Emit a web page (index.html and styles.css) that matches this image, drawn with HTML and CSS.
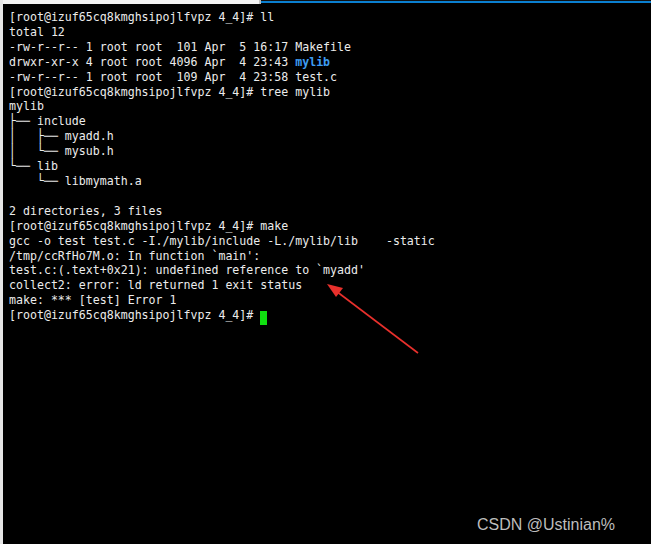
FILE: index.html
```html
<!DOCTYPE html>
<html>
<head>
<meta charset="utf-8">
<link rel="stylesheet" href="styles.css">
</head>
<body>
<div class="window">
  <div class="topbar"><div class="tab"></div><div class="accent"></div></div>
  <div class="term">
<pre class="out">[root@izuf65cq8kmghsipojlfvpz 4_4]# ll
total 12
-rw-r--r-- 1 root root  101 Apr  5 16:17 Makefile
drwxr-xr-x 4 root root 4096 Apr  4 23:43 <span class="dir">mylib</span>
-rw-r--r-- 1 root root  109 Apr  4 23:58 test.c
[root@izuf65cq8kmghsipojlfvpz 4_4]# tree mylib
mylib
<span class="bx">├</span>── include
<span class="bx">│</span>   <span class="bx">├</span>── myadd.h
<span class="bx">│</span>   <span class="bx">└</span>── mysub.h
<span class="bx">└</span>── lib
    <span class="bx">└</span>── libmymath.a

2 directories, 3 files
[root@izuf65cq8kmghsipojlfvpz 4_4]# make
gcc -o test test.c -I./mylib/include -L./mylib/lib    -static
/tmp/ccRfHo7M.o: In function `main':
test.c:(.text+0x21): undefined reference to `myadd'
collect2: error: ld returned 1 exit status
make: *** [test] Error 1
[root@izuf65cq8kmghsipojlfvpz 4_4]# <span class="cursor"> </span></pre>
  </div>
  <svg class="arrow" width="651" height="544" viewBox="0 0 651 544">
    <line x1="418" y1="353" x2="336" y2="291" stroke="#e8302c" stroke-width="1.6"/>
    <polygon points="327,284 343,288 336,297" fill="#e8302c"/>
  </svg>
  <div class="mark">CSDN @Ustinian%</div>
</div>
</body>
</html>
```
FILE: styles.css
```css
html, body {
  margin: 0;
  padding: 0;
  background: #000;
}
.window {
  position: relative;
  width: 651px;
  height: 544px;
  background: #000;
  border-left: 3px solid #e6e6e6;
  box-sizing: border-box;
  overflow: hidden;
}
.topbar {
  display: flex;
  height: 4px;
}
.tab {
  width: 256px;
  background: #f2f2f2;
  border-right: 2px solid #bdbdbd;
}
.accent {
  flex: 1;
  border-top: 1px solid #111;
  background: #0a7fd0;
  height: 2px;
}
.term {
  padding: 6px 0 0 6px;
}
.out {
  margin: 0;
  font-family: "DejaVu Sans Mono", monospace;
  font-size: 11.6px;
  line-height: 14.9px;
  color: #ececec;
}
.bx {
  display: inline-block;
  transform: scaleY(1.12);
  transform-origin: 50% 55%;
}
.dir {
  color: #3d9cf2;
  font-weight: bold;
}
.cursor {
  background: #10e010;
  display: inline-block;
  width: 7px;
  height: 14px;
  vertical-align: -3px;
}
.arrow {
  position: absolute;
  left: -3px;
  top: 0;
}
.mark {
  position: absolute;
  left: 474px;
  top: 516px;
  font-family: "Liberation Sans", Arial, sans-serif;
  font-size: 16px;
  color: #bdbdbd;
}
```
